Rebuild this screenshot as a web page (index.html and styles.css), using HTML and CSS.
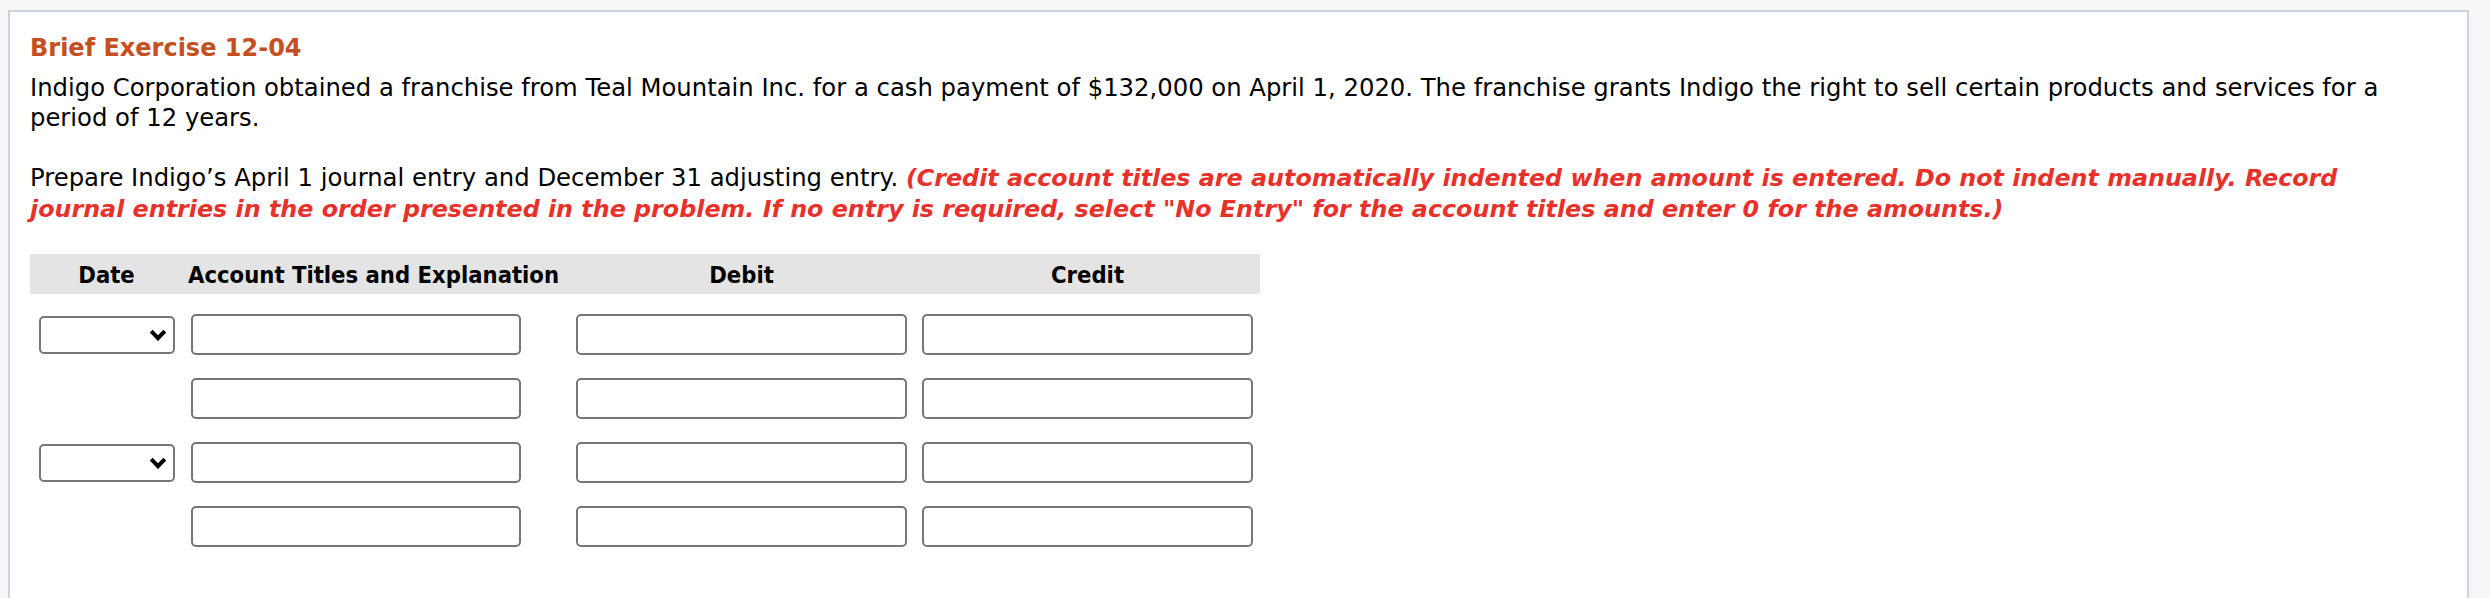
FILE: index.html
```html
<!DOCTYPE html>
<html lang="en">
<head>
<meta charset="utf-8">
<title>Brief Exercise 12-04</title>
<link rel="stylesheet" href="styles.css">
</head>
<body>
<div class="panel">
  <h2 class="title">Brief Exercise 12-04</h2>
  <p class="text intro">Indigo Corporation obtained a franchise from Teal Mountain Inc. for a cash payment of $132,000 on April 1, 2020. The franchise grants Indigo the right to sell certain products and services for a period of 12 years.</p>
  <p class="text task">Prepare Indigo’s April 1 journal entry and December 31 adjusting entry. <em class="note">(Credit account titles are automatically indented when amount is entered. Do not indent manually. Record journal entries in the order presented in the problem. If no entry is required, select "No Entry" for the account titles and enter 0 for the amounts.)</em></p>

  <div class="journal">
    <div class="jhead">
      <div class="hcell hdate">Date</div>
      <div class="hcell hacct">Account Titles and Explanation</div>
      <div class="hcell hamt">Debit</div>
      <div class="hcell hamt">Credit</div>
    </div>
    <div class="jbody">
      <div class="jrow">
        <div class="cell"><div class="select"><svg class="chev" width="18" height="12" viewBox="0 0 18 12"><path d="M2.2 2.2 L9 9.2 L15.8 2.2" fill="none" stroke="#000" stroke-width="4"/></svg></div></div>
        <div class="cell"><input class="field facct" type="text"></div>
        <div class="cell"><input class="field famt" type="text"></div>
        <div class="cell"><input class="field famt" type="text"></div>
      </div>
      <div class="jrow">
        <div class="cell"></div>
        <div class="cell"><input class="field facct" type="text"></div>
        <div class="cell"><input class="field famt" type="text"></div>
        <div class="cell"><input class="field famt" type="text"></div>
      </div>
      <div class="jrow">
        <div class="cell"><div class="select"><svg class="chev" width="18" height="12" viewBox="0 0 18 12"><path d="M2.2 2.2 L9 9.2 L15.8 2.2" fill="none" stroke="#000" stroke-width="4"/></svg></div></div>
        <div class="cell"><input class="field facct" type="text"></div>
        <div class="cell"><input class="field famt" type="text"></div>
        <div class="cell"><input class="field famt" type="text"></div>
      </div>
      <div class="jrow">
        <div class="cell"></div>
        <div class="cell"><input class="field facct" type="text"></div>
        <div class="cell"><input class="field famt" type="text"></div>
        <div class="cell"><input class="field famt" type="text"></div>
      </div>
    </div>
  </div>
</div>
</body>
</html>
```

FILE: styles.css
```css
html, body {
  margin: 0;
  padding: 0;
  background: #f5f6f8;
}

body {
  font-family: "DejaVu Sans", Verdana, sans-serif;
  color: #000;
  overflow: hidden;
}

.panel {
  box-sizing: border-box;
  width: 2461px;
  min-height: 700px;
  margin: 10px 0 0 8px;
  padding: 21px 40px 0 20px;
  background: #fff;
  border: 2px solid #cdd4de;
}

.title {
  margin: 0 0 10px;
  font-size: 24px;
  line-height: 30px;
  font-weight: bold;
  color: #c5501f;
}

.text {
  margin: 0;
  font-size: 24.3px;
  line-height: 29.5px;
}

.intro {
  line-height: 30px;
  margin-bottom: 30px;
}

.task {
  margin-bottom: 30px;
}

.note {
  font-size: 23.8px;
  font-weight: bold;
  font-style: italic;
  color: #e8312a;
}

.journal {
  width: 1230px;
}

.jhead,
.jrow {
  display: grid;
  grid-template-columns: 153px 393px 346px 338px;
}

.jhead {
  height: 40px;
  background: #e4e4e4;
  font-family: "DejaVu Sans Condensed", "DejaVu Sans", sans-serif;
  font-stretch: condensed;
  font-weight: bold;
  font-size: 23.6px;
  line-height: 37px;
  padding-top: 3px;
  box-sizing: border-box;
}

.hcell {
  white-space: nowrap;
}

.hdate {
  text-align: center;
}

.hacct {
  padding-left: 5px;
}

.hamt {
  width: 331px;
  text-align: center;
}

.jbody {
  display: grid;
  row-gap: 23px;
  margin-top: 20px;
}

.jrow {
  height: 41px;
  align-items: center;
}

.cell {
  display: flex;
  align-items: center;
  height: 41px;
}

.select {
  box-sizing: border-box;
  width: 136px;
  height: 38px;
  margin-left: 9px;
  border: 2px solid #767676;
  border-radius: 5px;
  background: #fff;
  display: flex;
  align-items: center;
  justify-content: flex-end;
  padding-right: 6px;
}

.chev {
  display: block;
}

.field {
  box-sizing: border-box;
  height: 41px;
  margin: 0;
  padding: 0 8px;
  border: 2px solid #767676;
  border-radius: 5px;
  background: #fff;
  font: 24px "DejaVu Sans", sans-serif;
  outline: none;
}

.facct {
  width: 330px;
  margin-left: 8px;
}

.famt {
  width: 331px;
}
```
